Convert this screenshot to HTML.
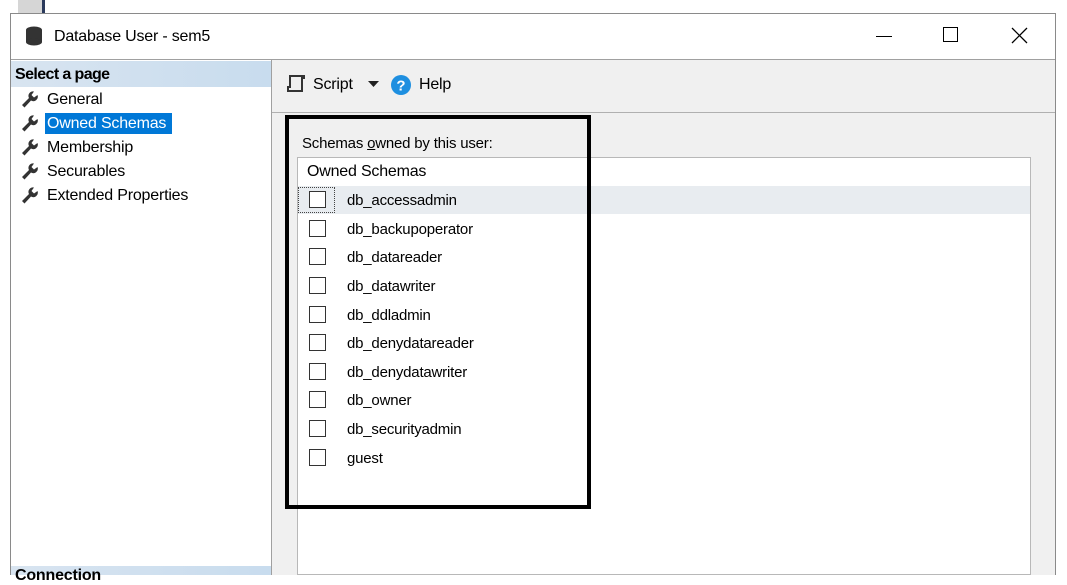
<!DOCTYPE html>
<html><head><style>
body{margin:0;width:1067px;height:575px;background:#fff;position:relative;overflow:hidden;font-family:"Liberation Sans",sans-serif;font-size:15px;color:#000}
.a{position:absolute}
.t{position:absolute;white-space:nowrap;letter-spacing:-0.2px}
.cb{position:absolute;left:309px;width:17px;height:17px;border:1px solid #333;background:#fff;box-sizing:border-box}
</style></head><body>
<div class="a" style="left:18px;top:0;width:24px;height:13px;background:#d6d6d6"></div>
<div class="a" style="left:42px;top:0;width:3px;height:13px;background:#2b3a5c"></div>
<div class="a" style="left:10px;top:13px;width:1046px;height:562px;border:1px solid #8a8a8a;border-bottom:none;box-sizing:border-box;background:#fff"></div>
<svg class="a" style="left:24px;top:25px" width="20" height="22"><ellipse cx="10" cy="5" rx="8" ry="3.5" fill="#333"/><rect x="2" y="5" width="16" height="12" fill="#333"/><ellipse cx="10" cy="17" rx="8" ry="3.5" fill="#333"/></svg>
<div class="t" style="left:54px;top:28px;font-size:16px">Database User - sem5</div>
<div class="a" style="left:876px;top:36px;width:16px;height:1px;background:#000"></div>
<div class="a" style="left:943px;top:27px;width:15px;height:15px;border:1px solid #000;box-sizing:border-box"></div>
<svg class="a" style="left:1011px;top:27px" width="17" height="17"><path d="M1 1L16 16M16 1L1 16" stroke="#000" stroke-width="1.3"/></svg>
<div class="a" style="left:11px;top:59px;width:1044px;height:1px;background:#a0a0a0"></div>
<div class="a" style="left:11px;top:60px;width:260px;height:515px;background:#fff;border-right:1px solid #a0a0a0"></div>
<div class="a" style="left:11px;top:61px;width:260px;height:26px;background:linear-gradient(90deg,#d8e4f0,#c8dcee)"></div>
<div class="t" style="left:15px;top:66px;font-weight:bold;font-size:16px;letter-spacing:-0.6px">Select a page</div>
<div class="a" style="left:45px;top:113px;width:127px;height:21px;background:#0078d7"></div>
<svg width="0" height="0" style="position:absolute"><defs><path id="w" d="M1 14L8 7A4.5 4.5 0 0 1 13 0.5L10.5 4L13 6.5L16.5 4A4.5 4.5 0 0 1 10 9.5L3.5 16.5Z" fill="#333"/></defs></svg>
<svg class="a" style="left:21px;top:91px" width="18" height="18"><use href="#w"/></svg>
<svg class="a" style="left:21px;top:115px" width="18" height="18"><use href="#w"/></svg>
<svg class="a" style="left:21px;top:139px" width="18" height="18"><use href="#w"/></svg>
<svg class="a" style="left:21px;top:163px" width="18" height="18"><use href="#w"/></svg>
<svg class="a" style="left:21px;top:187px" width="18" height="18"><use href="#w"/></svg>
<div class="t" style="left:47px;top:91px;font-size:16px">General</div>
<div class="t" style="left:47px;top:115px;font-size:16px;color:#fff">Owned Schemas</div>
<div class="t" style="left:47px;top:139px;font-size:16px">Membership</div>
<div class="t" style="left:47px;top:163px;font-size:16px">Securables</div>
<div class="t" style="left:47px;top:187px;font-size:16px">Extended Properties</div>
<div class="a" style="left:11px;top:566px;width:260px;height:9px;background:linear-gradient(90deg,#d8e4f0,#c8dcee)"></div>
<div class="t" style="left:15px;top:567px;font-weight:bold;font-size:16px">Connection</div>
<div class="a" style="left:272px;top:60px;width:783px;height:515px;background:#f0f0f0"></div>
<div class="a" style="left:272px;top:112px;width:783px;height:1px;background:#b0b0b0"></div>
<svg class="a" style="left:285px;top:74px" width="22" height="22"><path d="M5 2H19V4H17V17H3V13H5Z M3 13V17" fill="none" stroke="#333" stroke-width="2"/></svg>
<div class="t" style="left:313px;top:76px;font-size:16px">Script</div>
<svg class="a" style="left:368px;top:81px" width="12" height="8"><path d="M0 0H11L5.5 6Z" fill="#222"/></svg>
<svg class="a" style="left:390px;top:74px" width="22" height="22"><circle cx="11" cy="11" r="10" fill="#1e8fe0"/><text x="11" y="16.5" font-size="15" font-weight="bold" fill="#fff" text-anchor="middle" font-family="Liberation Sans">?</text></svg>
<div class="t" style="left:419px;top:76px;font-size:16px">Help</div>
<div class="t" style="left:302px;top:135px">Schemas <u>o</u>wned by this user:</div>
<div class="a" style="left:297px;top:157px;width:734px;height:418px;background:#fff;border:1px solid #b8b8b8;box-sizing:border-box"></div>
<div class="t" style="left:307px;top:163px;font-size:16px">Owned Schemas</div>
<div class="a" style="left:298px;top:186px;width:732px;height:28px;background:#e8ecf0"></div>
<div class="a" style="left:298px;top:187px;width:37px;height:26px;border:1px dotted #444;box-sizing:border-box"></div>
<div class="cb" style="top:191px"></div><div class="t" style="left:347px;top:192px">db_accessadmin</div>
<div class="cb" style="top:220px"></div><div class="t" style="left:347px;top:221px">db_backupoperator</div>
<div class="cb" style="top:248px"></div><div class="t" style="left:347px;top:249px">db_datareader</div>
<div class="cb" style="top:277px"></div><div class="t" style="left:347px;top:278px">db_datawriter</div>
<div class="cb" style="top:306px"></div><div class="t" style="left:347px;top:307px">db_ddladmin</div>
<div class="cb" style="top:334px"></div><div class="t" style="left:347px;top:335px">db_denydatareader</div>
<div class="cb" style="top:363px"></div><div class="t" style="left:347px;top:364px">db_denydatawriter</div>
<div class="cb" style="top:391px"></div><div class="t" style="left:347px;top:392px">db_owner</div>
<div class="cb" style="top:420px"></div><div class="t" style="left:347px;top:421px">db_securityadmin</div>
<div class="cb" style="top:449px"></div><div class="t" style="left:347px;top:450px">guest</div>
<div class="a" style="left:285px;top:115px;width:306px;height:394px;border:4px solid #000;box-sizing:border-box"></div>
</body></html>
